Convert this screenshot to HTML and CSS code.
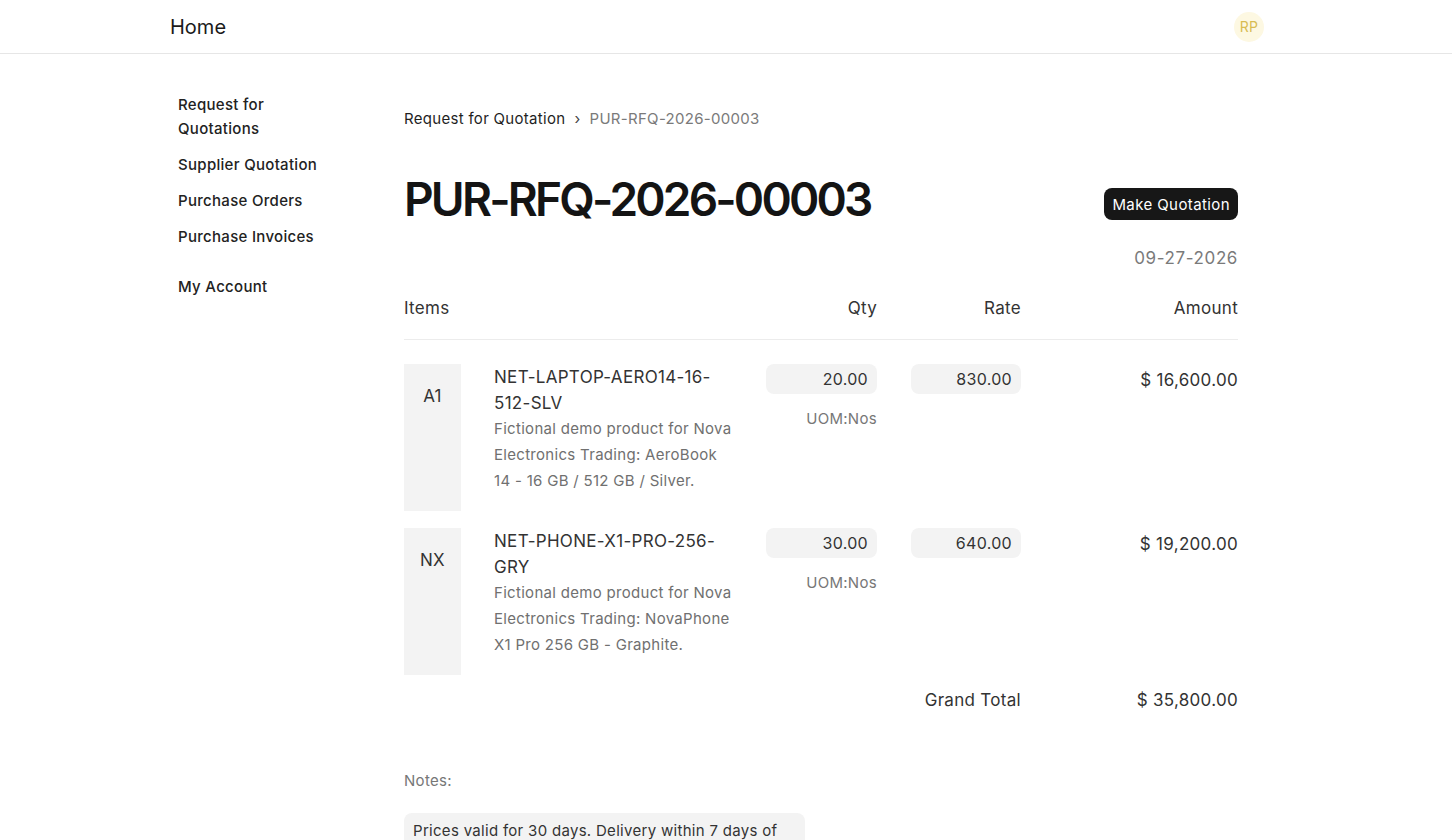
FILE: index.html
```html
<!DOCTYPE html>
<html>
  <head>
    <title>PUR-RFQ-2026-00003</title>
    <meta name="viewport" content="width=device-width, initial-scale=1.0" />
    <link rel="stylesheet" href="styles.css">
  </head>
  <body>
    <nav class="navbar">
      <div class="container nav-inner">
        <a class="brand" href="#">Home</a>
        <div class="avatar">RP</div>
      </div>
    </nav>

    <div class="container layout">
      <aside class="sidebar">
        <a class="side-link" href="#">Request for Quotations</a>
        <a class="side-link" href="#">Supplier Quotation</a>
        <a class="side-link" href="#">Purchase Orders</a>
        <a class="side-link" href="#">Purchase Invoices</a>
        <a class="side-link account" href="#">My Account</a>
      </aside>

      <main class="main">
        <div class="breadcrumb">
          <a href="#">Request for Quotation</a>
          <span class="sep">›</span>
          <span class="current">PUR-RFQ-2026-00003</span>
        </div>

        <div class="title-row">
          <h1>PUR-RFQ-2026-00003</h1>
          <button class="btn-dark">Make Quotation</button>
        </div>
        <div class="doc-date">09-27-2026</div>

        <div class="items">
          <div class="row head">
            <div>Items</div>
            <div class="num">Qty</div>
            <div class="num">Rate</div>
            <div class="num">Amount</div>
          </div>

          <div class="row item">
            <div class="item-cell">
              <div class="thumb">A1</div>
              <div class="item-text">
                <div class="item-code">NET-LAPTOP-AERO14-16-512-SLV</div>
                <div class="item-desc">Fictional demo product for Nova Electronics Trading: AeroBook 14 - 16 GB / 512 GB / Silver.</div>
              </div>
            </div>
            <div class="num">
              <div class="field">20.00</div>
              <div class="uom">UOM:Nos</div>
            </div>
            <div class="num">
              <div class="field">830.00</div>
            </div>
            <div class="num amount">$ 16,600.00</div>
          </div>

          <div class="row item">
            <div class="item-cell">
              <div class="thumb">NX</div>
              <div class="item-text">
                <div class="item-code">NET-PHONE-X1-PRO-256-GRY</div>
                <div class="item-desc">Fictional demo product for Nova Electronics Trading: NovaPhone X1 Pro 256 GB - Graphite.</div>
              </div>
            </div>
            <div class="num">
              <div class="field">30.00</div>
              <div class="uom">UOM:Nos</div>
            </div>
            <div class="num">
              <div class="field">640.00</div>
            </div>
            <div class="num amount">$ 19,200.00</div>
          </div>

          <div class="row total">
            <div></div>
            <div></div>
            <div class="num">Grand Total</div>
            <div class="num">$ 35,800.00</div>
          </div>
        </div>

        <div class="notes">
          <div class="notes-label">Notes:</div>
          <div class="notes-box">Prices valid for 30 days. Delivery within 7 days of PO confirmation.</div>
        </div>
      </main>
    </div>
  </body>
</html>
```

FILE: styles.css
```css
* {
  box-sizing: border-box;
}
body {
  margin: 0;
  font-family: Inter, "Noto Sans", sans-serif;
  letter-spacing: 0.3px;
  color: #1c1c1c;
  background: #fff;
}
a {
  color: inherit;
  text-decoration: none;
}
.container {
  max-width: 1140px;
  margin: 0 auto;
  padding: 0 15px;
}

/* top bar */
.navbar {
  height: 54px;
  border-bottom: 1px solid #e6e6e6;
}
.nav-inner {
  height: 100%;
  display: flex;
  align-items: center;
  justify-content: space-between;
}
.brand {
  font-size: 20px;
  letter-spacing: 0;
  margin-left: -1px;
  color: #1a1a1a;
}
.avatar {
  width: 30px;
  height: 30px;
  border-radius: 50%;
  background: #fdf8e2;
  color: #d8bc52;
  font-size: 14px;
  display: flex;
  align-items: center;
  justify-content: center;
  margin-right: 17px;
}

/* page body */
.layout {
  display: flex;
}
.sidebar {
  width: 233px;
  padding: 39px 0 0 7px;
  display: flex;
  flex-direction: column;
  gap: 12px;
}
.side-link {
  width: 150px;
  font-size: 15px;
  line-height: 24px;
  font-weight: 500;
  color: #222;
}
.side-link.account {
  margin-top: 14px;
}
.main {
  width: 834px;
  padding-top: 53px;
}
.breadcrumb {
  font-size: 15px;
  line-height: 24px;
  display: flex;
  gap: 9px;
  color: #1f1f1f;
}
.breadcrumb .sep {
  color: #444;
}
.breadcrumb .current {
  color: #7a7a7a;
}
.title-row {
  margin-top: 40px;
  display: flex;
  align-items: center;
  justify-content: space-between;
}
.title-row h1 {
  margin: 0;
  font-size: 46px;
  line-height: 56px;
  font-weight: 600;
  letter-spacing: -2.8px;
  color: #141414;
}
.btn-dark {
  margin-top: 10px;
  font-family: inherit;
  letter-spacing: 0.4px;
  font-size: 15px;
  color: #fff;
  background: #171717;
  border: none;
  border-radius: 8px;
  height: 32px;
  padding: 0 8px;
}
.doc-date {
  text-align: right;
  font-size: 17px;
  line-height: 24px;
  letter-spacing: 0.6px;
  color: #7a7a7a;
  margin-top: 19px;
}

/* item grid */
.row {
  display: grid;
  grid-template-columns: 328px 111px 110px 183px;
  column-gap: 34px;
}
.num {
  text-align: right;
}
.row.head {
  margin-top: 26px;
  font-size: 17px;
  line-height: 24px;
  color: #333;
  padding-bottom: 19px;
  border-bottom: 1px solid #ececec;
}
.row.item {
  margin-top: 24px;
}
.row.item + .row.item {
  margin-top: 17px;
}
.item-cell {
  display: flex;
  gap: 33px;
}
.thumb {
  width: 57px;
  flex-shrink: 0;
  background: #f3f3f3;
  text-align: center;
  font-size: 17px;
  line-height: 24px;
  padding-top: 20px;
  color: #333;
}
.item-text {
  width: 240px;
  padding-bottom: 17px;
}
.item-code {
  font-size: 17px;
  line-height: 26px;
  color: #333;
  word-break: break-word;
}
.item-desc {
  font-size: 15px;
  line-height: 26px;
  color: #707070;
}
.field {
  height: 30px;
  line-height: 30px;
  background: #f3f3f3;
  border-radius: 8px;
  padding: 0 9px;
  font-size: 16px;
  color: #333;
}
.uom {
  margin-top: 13px;
  font-size: 15px;
  line-height: 24px;
  color: #777;
}
.amount {
  font-size: 17px;
  line-height: 32px;
  color: #333;
}
.row.total {
  margin-top: 12px;
  font-size: 17px;
  line-height: 26px;
  color: #333;
}
.notes {
  margin-top: 56px;
}
.notes-label {
  font-size: 15px;
  line-height: 24px;
  color: #777;
}
.notes-box {
  margin-top: 20px;
  width: 401px;
  background: #f3f3f3;
  border-radius: 8px;
  padding: 5px 9px;
  font-size: 15px;
  line-height: 26px;
  color: #333;
}
```
